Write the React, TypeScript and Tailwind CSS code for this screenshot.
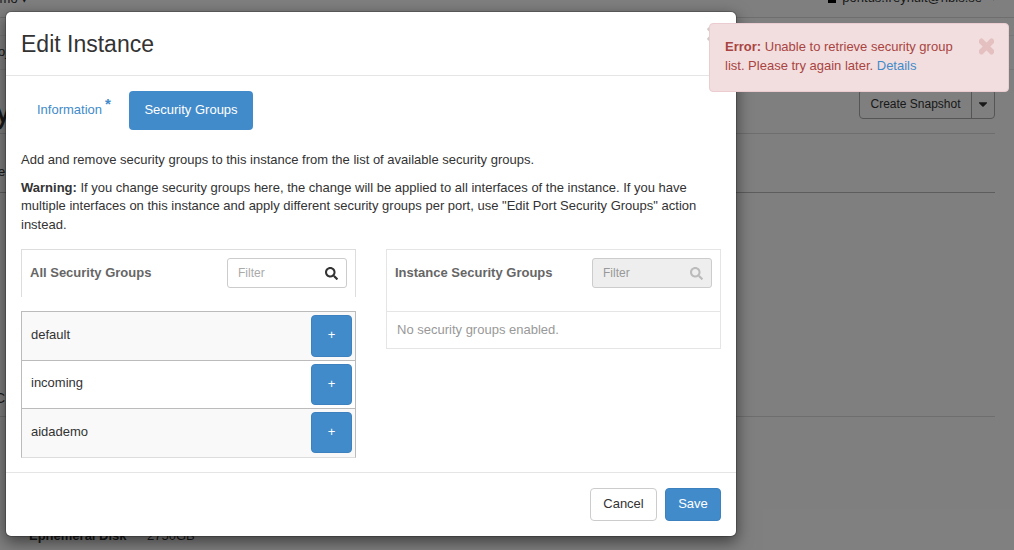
import React from "react";
import { FaSearch, FaTimes, FaCaretDown } from "react-icons/fa";

function Filter({ disabled }: { disabled?: boolean }) {
  return (
    <div
      className={`flex h-[30px] w-[120px] items-center justify-between rounded-[3px] border border-[#ccc] pl-[10px] pr-[8px] ${
        disabled ? "bg-[#eee]" : "bg-white"
      }`}
    >
      <span className={`text-[12px] ${disabled ? "text-[#999]" : "text-[#aaa]"}`}>Filter</span>
      <FaSearch className={`h-[13px] w-[13px] ${disabled ? "text-[#bbb]" : "text-[#333]"}`} />
    </div>
  );
}

function Row({ name, striped, h, btn, top, label }: { name: string; striped?: boolean; h: string; btn: string; top?: boolean; label: string }) {
  return (
    <div
      className={`flex ${h} items-start justify-between pl-[9px] pr-[3px] pt-[3px] ${striped ? "bg-[#f9f9f9]" : "bg-white"} ${
        top ? "" : "border-t border-[#bbb]"
      }`}
    >
      <span className={label}>{name}</span>
      <button className={`flex ${btn} w-[41px] items-center justify-center rounded-[4px] border border-[#3d82be] bg-[#428bca] pb-[1px] text-[13px] text-white`}>
        +
      </button>
    </div>
  );
}

export default function App() {
  return (
    <div className="relative h-[550px] w-[1014px] overflow-hidden bg-white font-['Liberation_Sans',Arial,sans-serif] text-[13px] leading-[18.57px] text-[#333]">
      {/* page behind the dialog */}
      <div className="flex h-[18px] items-end justify-between border-b border-[#ddd] pr-[16px]">
        <span className="-ml-[17px] mb-[8px] whitespace-nowrap text-[13px]">Demo ▾</span>
        <div className="mb-[9px] flex items-center gap-[6px] text-[13px]">
          <span className="h-[9px] w-[8px] bg-black" />
          <span>pontus.freyhult@nbis.se</span>
          <FaCaretDown className="ml-[1px] h-[9px] w-[9px] text-[#555]" />
        </div>
      </div>
      <div className="h-[18px] border-b border-[#eee]" />
      <div className="flex h-[34px] items-center border-b border-[#eee]">
        <span className="-ml-[15px] text-[13px]">Project</span>
      </div>
      <div className="mr-[19px] flex h-[64px] justify-between border-b border-[#ddd]">
        <span className="-ml-[6px] mt-[20px] text-[36px] leading-[40px]">y</span>
        <div className="mt-[19px] flex h-[30px] self-start overflow-hidden rounded-[4px] border border-[#aaa] text-[12px] leading-[28px]">
          <span className="w-[111px] text-center">Create Snapshot</span>
          <span className="flex w-[23px] items-center justify-center border-l border-[#aaa]">
            <FaCaretDown className="h-[14px] w-[14px]" />
          </span>
        </div>
      </div>
      <div className="mr-[19px] flex h-[59px] items-center border-b border-[#bbb]">
        <span className="-ml-[2px] mt-[18px]">e</span>
      </div>
      <div className="mr-[19px] flex h-[224px] items-end border-b border-[#ddd]">
        <span className="-ml-[5px] mb-[8px] text-[14px]">C</span>
      </div>
      <div className="flex gap-[20px] pl-[29px] pt-[110px] text-[13px]">
        <b className="w-[98px] whitespace-nowrap">Ephemeral Disk</b>
        <span>2750GB</span>
      </div>

      {/* backdrop */}
      <div className="absolute inset-0 bg-black/50" />

      {/* dialog */}
      <div className="absolute left-[5px] top-[11px] flex h-[526px] w-[732px] flex-col rounded-[6px] border border-black/20 bg-white bg-clip-padding shadow-[0_5px_15px_rgba(0,0,0,0.5)]">
        <div className="flex h-[64px] shrink-0 items-center justify-between border-b border-[#e5e5e5] px-[15px]">
          <h4 className="text-[23px] leading-[26px]">Edit Instance</h4>
          <FaTimes className="-mt-[20px] h-[20px] w-[14px] text-black/20" />
        </div>

        <div className="flex-1 px-[15px] pt-[15px]">
          <div className="flex h-[39px] gap-[4px]">
            <a className="flex w-[104px] items-center pl-[16px] text-[#428bca]">
              Information<sup className="ml-[3px] mt-[1px] text-[15px] font-bold leading-none">*</sup>
            </a>
            <a className="flex w-[124px] items-center justify-center rounded-[4px] bg-[#428bca] text-white">
              Security Groups
            </a>
          </div>
          <p className="mt-[21px] mb-[9px]">Add and remove security groups to this instance from the list of available security groups.</p>
          <p className="mb-[15px]">
            <b>Warning:</b> If you change security groups here, the change will be applied to all interfaces of the instance. If you have multiple interfaces on this instance and apply different security groups per port, use "Edit Port Security Groups" action instead.
          </p>

          <div className="flex gap-[30px]">
            <div className="w-[335px]">
              <div className="flex h-[48px] items-start justify-between border-x border-t border-[#ddd] px-[8px] pt-[8px]">
                <b className="mt-[6px] text-[#666]">All Security Groups</b>
                <Filter />
              </div>
              <div className="mt-[14px] border border-[#bbb] border-b-[#ddd]">
                <Row name="default" striped top h="h-[48px]" btn="h-[42px]" label="mt-[11px]" />
                <Row name="incoming" h="h-[48px]" btn="h-[41px]" label="mt-[10px]" />
                <Row name="aidademo" striped h="h-[49px]" btn="h-[41px]" label="mt-[11px]" />
              </div>
            </div>
            <div className="w-[335px] self-start border border-[#e5e5e5]">
              <div className="flex h-[62px] items-start justify-between border-b border-[#e5e5e5] px-[8px] pt-[8px]">
                <b className="mt-[6px] text-[#666]">Instance Security Groups</b>
                <Filter disabled />
              </div>
              <div className="flex h-[36px] items-center pl-[10px] text-[#999]">No security groups enabled.</div>
            </div>
          </div>
        </div>

        <div className="flex h-[64px] shrink-0 justify-end gap-[8px] border-t border-[#e5e5e5] px-[15px] pt-[15px]">
          <button className="h-[33px] w-[67px] rounded-[4px] border border-[#ccc] bg-white">Cancel</button>
          <button className="h-[33px] w-[56px] rounded-[4px] border border-[#3d82be] bg-[#428bca] text-white">Save</button>
        </div>
      </div>

      {/* alert */}
      <div className="absolute left-[709px] top-[23px] flex h-[69px] w-[300px] items-start justify-between rounded-[4px] border border-[#ebccd1] bg-[#f2dede] pl-[15px] pr-[14px] pt-[14px] text-[#a94442]">
        <p className="w-[240px]">
          <b>Error:</b> Unable to retrieve security group list. Please try again later. <a className="text-[#428bca]">Details</a>
        </p>
        <FaTimes className="-mt-[2px] h-[21px] w-[15px] stroke-[40] text-[#e4c0c0]" />
      </div>
    </div>
  );
}
